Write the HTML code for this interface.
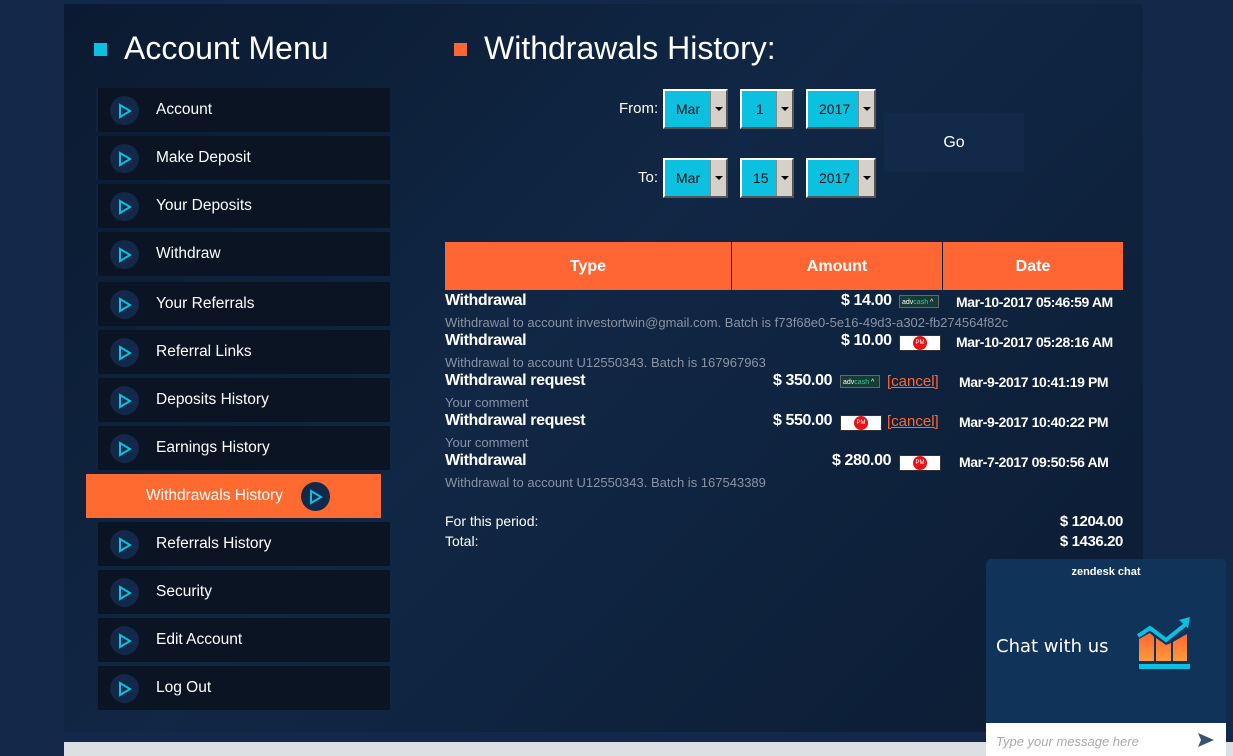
<!DOCTYPE html>
<html><head><style>
body{margin:0;width:1233px;height:756px;overflow:hidden;background:#13294a;font-family:"Liberation Sans",Arial,sans-serif;position:relative}
.main{position:absolute;left:64px;top:4px;width:1079px;height:728px;background:linear-gradient(135deg,#0b1a30 0%,#102745 45%,#0c1c33 100%)}
.bottom{position:absolute;left:64px;top:742px;width:1169px;height:14px;background:#dde0e3}
.h{position:absolute;color:#fff;font-size:32px}
.sq{position:absolute;width:13px;height:13px}
.mi{position:absolute;left:96px;width:294px;height:44px;background:#0a1422;border-left:2px solid #12243b;color:#fff;font-size:15.5px;box-sizing:border-box}
.mi .ic{position:absolute;left:12px;top:8px;width:29px;height:29px;border-radius:50%;background:#12294a}
.mi span{position:absolute;left:58px;top:13px}
.ic svg{position:absolute;left:7px;top:7px}
.act{position:absolute;left:86px;top:474px;width:295px;height:44px;background:#ff6a30;color:#fff;font-size:15.5px}
.sel{position:absolute;height:40px;background:#0cc0e0;border:2px solid;border-color:#fff #555 #555 #fff;box-sizing:border-box;font-size:14px;color:#111;line-height:36px}
.sel b{position:absolute;right:0;top:0;width:15px;height:36px;background:#d5d0c8;border-left:1px solid #888}
.sel b:after{content:"";position:absolute;left:4px;top:16px;border:4px solid transparent;border-top:4px solid #000}
.lbl{position:absolute;color:#fff;font-size:15px}
.th{position:absolute;top:242px;height:48px;background:#ff6633;color:#fff;font-size:16px;font-weight:bold;text-align:center;line-height:50px}
.t{position:absolute;color:#fff;font-size:16px;font-weight:bold;letter-spacing:-0.4px}
.s{position:absolute;color:#8a93a3;font-size:13px;left:445px}
.r{position:absolute;color:#fff;font-size:14px;font-weight:bold;letter-spacing:-0.4px}
.pm{position:absolute;width:40px;height:14px;background:#fff;border:1px solid #333}
.pm:after{content:"PM";position:absolute;left:13px;top:0px;width:14px;height:14px;border-radius:50%;background:#e3151a;color:#fff;font-size:6px;line-height:14px;text-align:center}
.ac{position:absolute;width:40px;height:13px;background:#173a35;border:1px solid #666;font-size:7px;color:#fff;line-height:13px;padding-left:2px;box-sizing:border-box}
.cn{position:absolute;color:#ff6633;font-size:15px;text-decoration:underline}
</style></head><body>
<div class="main"></div>
<div class="bottom"></div>
<div class="sq" style="left:94px;top:43px;background:#0cc0e0"></div>
<div class="h" style="left:124px;top:30px">Account Menu</div>
<div class="sq" style="left:454px;top:43px;background:#ff6633"></div>
<div class="h" style="left:484px;top:30px">Withdrawals History:</div>

<div class="mi" style="top:88px"><div class="ic"><svg width="16" height="16"><path d="M3 2L13 8L3 14Z" fill="none" stroke="#0cc0e0" stroke-width="2"/></svg></div><span>Account</span></div>
<div class="mi" style="top:136px"><div class="ic"><svg width="16" height="16"><path d="M3 2L13 8L3 14Z" fill="none" stroke="#0cc0e0" stroke-width="2"/></svg></div><span>Make Deposit</span></div>
<div class="mi" style="top:184px"><div class="ic"><svg width="16" height="16"><path d="M3 2L13 8L3 14Z" fill="none" stroke="#0cc0e0" stroke-width="2"/></svg></div><span>Your Deposits</span></div>
<div class="mi" style="top:232px"><div class="ic"><svg width="16" height="16"><path d="M3 2L13 8L3 14Z" fill="none" stroke="#0cc0e0" stroke-width="2"/></svg></div><span>Withdraw</span></div>
<div class="mi" style="top:282px"><div class="ic"><svg width="16" height="16"><path d="M3 2L13 8L3 14Z" fill="none" stroke="#0cc0e0" stroke-width="2"/></svg></div><span>Your Referrals</span></div>
<div class="mi" style="top:330px"><div class="ic"><svg width="16" height="16"><path d="M3 2L13 8L3 14Z" fill="none" stroke="#0cc0e0" stroke-width="2"/></svg></div><span>Referral Links</span></div>
<div class="mi" style="top:378px"><div class="ic"><svg width="16" height="16"><path d="M3 2L13 8L3 14Z" fill="none" stroke="#0cc0e0" stroke-width="2"/></svg></div><span>Deposits History</span></div>
<div class="mi" style="top:426px"><div class="ic"><svg width="16" height="16"><path d="M3 2L13 8L3 14Z" fill="none" stroke="#0cc0e0" stroke-width="2"/></svg></div><span>Earnings History</span></div>
<div class="act"><span style="position:absolute;left:60px;top:13px">Withdrawals History</span><div style="position:absolute;left:215px;top:8px;width:29px;height:29px;border-radius:50%;background:#12294a"><svg width="16" height="16" style="position:absolute;left:7px;top:7px"><path d="M3 2L13 8L3 14Z" fill="none" stroke="#0cc0e0" stroke-width="2"/></svg></div></div>
<div class="mi" style="top:522px"><div class="ic"><svg width="16" height="16"><path d="M3 2L13 8L3 14Z" fill="none" stroke="#0cc0e0" stroke-width="2"/></svg></div><span>Referrals History</span></div>
<div class="mi" style="top:570px"><div class="ic"><svg width="16" height="16"><path d="M3 2L13 8L3 14Z" fill="none" stroke="#0cc0e0" stroke-width="2"/></svg></div><span>Security</span></div>
<div class="mi" style="top:618px"><div class="ic"><svg width="16" height="16"><path d="M3 2L13 8L3 14Z" fill="none" stroke="#0cc0e0" stroke-width="2"/></svg></div><span>Edit Account</span></div>
<div class="mi" style="top:666px"><div class="ic"><svg width="16" height="16"><path d="M3 2L13 8L3 14Z" fill="none" stroke="#0cc0e0" stroke-width="2"/></svg></div><span>Log Out</span></div>

<div class="lbl" style="left:619px;top:100px">From:</div>
<div class="lbl" style="left:638px;top:169px">To:</div>
<div class="sel" style="left:663px;top:89px;width:65px;padding-left:11px">Mar<b></b></div>
<div class="sel" style="left:740px;top:89px;width:54px;padding-left:14px">1<b></b></div>
<div class="sel" style="left:806px;top:89px;width:70px;padding-left:11px">2017<b></b></div>
<div class="sel" style="left:663px;top:158px;width:65px;padding-left:11px">Mar<b></b></div>
<div class="sel" style="left:740px;top:158px;width:54px;padding-left:11px">15<b></b></div>
<div class="sel" style="left:806px;top:158px;width:70px;padding-left:11px">2017<b></b></div>
<div style="position:absolute;left:884px;top:113px;width:140px;height:59px;background:#12294a;color:#fff;font-size:16px;text-align:center;line-height:59px">Go</div>

<div class="th" style="left:445px;width:286px">Type</div>
<div class="th" style="left:732px;width:210px">Amount</div>
<div class="th" style="left:943px;width:180px">Date</div>

<div class="t" style="left:445px;top:292px">Withdrawal</div>
<div class="t" style="left:841px;top:292px">$ 14.00</div><div class="ac" style="left:899px;top:295px">adv<span style="color:#3c9">cash</span> ^</div>
<div class="r" style="left:956px;top:294px">Mar-10-2017 05:46:59 AM</div>
<div class="s" style="top:315px">Withdrawal to account investortwin@gmail.com. Batch is f73f68e0-5e16-49d3-a302-fb274564f82c</div>

<div class="t" style="left:445px;top:332px">Withdrawal</div>
<div class="t" style="left:841px;top:332px">$ 10.00</div><div class="pm" style="left:899px;top:335px"></div>
<div class="r" style="left:956px;top:334px">Mar-10-2017 05:28:16 AM</div>
<div class="s" style="top:355px">Withdrawal to account U12550343. Batch is 167967963</div>

<div class="t" style="left:445px;top:372px">Withdrawal request</div>
<div class="t" style="left:773px;top:372px">$ 350.00</div><div class="ac" style="left:840px;top:375px">adv<span style="color:#3c9">cash</span> ^</div>
<div class="cn" style="left:887px;top:373px">[cancel]</div>
<div class="r" style="left:959px;top:374px">Mar-9-2017 10:41:19 PM</div>
<div class="s" style="top:395px">Your comment</div>

<div class="t" style="left:445px;top:412px">Withdrawal request</div>
<div class="t" style="left:773px;top:412px">$ 550.00</div><div class="pm" style="left:840px;top:415px"></div>
<div class="cn" style="left:887px;top:413px">[cancel]</div>
<div class="r" style="left:959px;top:414px">Mar-9-2017 10:40:22 PM</div>
<div class="s" style="top:435px">Your comment</div>

<div class="t" style="left:445px;top:452px">Withdrawal</div>
<div class="t" style="left:832px;top:452px">$ 280.00</div><div class="pm" style="left:899px;top:455px"></div>
<div class="r" style="left:959px;top:454px">Mar-7-2017 09:50:56 AM</div>
<div class="s" style="top:475px">Withdrawal to account U12550343. Batch is 167543389</div>

<div class="lbl" style="left:445px;top:513px;font-size:14px">For this period:</div>
<div class="lbl" style="left:445px;top:533px;font-size:14px">Total:</div>
<div class="r" style="right:110px;top:513px;font-size:15px">$ 1204.00</div>
<div class="r" style="right:110px;top:533px;font-size:15px">$ 1436.20</div>

<div style="position:absolute;left:986px;top:559px;width:240px;height:197px;background:#10335a;border-radius:5px 5px 0 0">
<div style="position:absolute;top:7px;width:100%;text-align:center;color:#fff;font-size:11px;font-weight:bold">zendesk chat</div>
<div style="position:absolute;left:10px;top:77px;color:#fff;font-size:18px;font-family:'DejaVu Sans',sans-serif">Chat with us</div>
<svg style="position:absolute;left:150px;top:55px" width="60" height="60"><defs><linearGradient id="g" x1="0" y1="0" x2="0" y2="1"><stop offset="0" stop-color="#ff6633"/><stop offset="1" stop-color="#ff9a3a"/></linearGradient></defs><path d="M3 25L14 19L18 23V47H3Z M20 24L30 31L35 29V47H20Z M37 28L51 20V47H37Z" fill="url(#g)"/><path d="M2 22L14 14L30 26L50 10" fill="none" stroke="#0cc0e0" stroke-width="4"/><path d="M43 6L54 3L52 14Z" fill="#0cc0e0"/><rect x="3" y="50" width="51" height="5" fill="#0cc0e0"/></svg>
<div style="position:absolute;left:0;top:164px;width:240px;height:33px;background:#fff"><span style="position:absolute;left:10px;top:11px;font-style:italic;color:#aaa;font-size:13px">Type your message here</span><svg style="position:absolute;left:211px;top:8px" width="18" height="18"><path d="M1 2L17 9L1 16L4 9Z" fill="#3a5070"/></svg></div>
</div>
</body></html>
